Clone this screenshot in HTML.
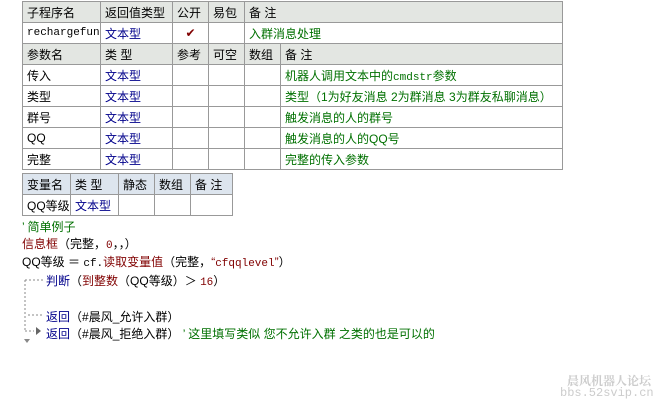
<!DOCTYPE html>
<html><head><meta charset="utf-8"><style>
body{margin:0;width:671px;height:405px;background:#fff;position:relative;overflow:hidden;font-family:"Liberation Sans","Noto Sans CJK SC",sans-serif;font-size:12px;}
table{position:absolute;border-collapse:collapse;}
td{border:1px solid #999;height:20px;padding:0 0 0 4px;white-space:nowrap;color:#000;}
.h td{background:#e3e6e2;}
.h2 td{background:#dde5ee;}
.b{color:#00008b}.g{color:#007000}.r{color:#800000}
.code{position:absolute;left:22px;white-space:nowrap;font-size:12px;}
.m{font-family:"Liberation Mono",monospace;font-size:11px;}
</style></head><body>
<table style="left:22px;top:1px;width:541px">
<colgroup><col style="width:78px"><col style="width:72px"><col style="width:36px"><col style="width:36px"><col style="width:36px"><col></colgroup>
<tr class="h"><td>子程序名</td><td>返回值类型</td><td>公开</td><td>易包</td><td colspan="2">备 注</td></tr>
<tr><td class="m">rechargefun</td><td class="b">文本型</td><td style="text-align:center;color:#800000;padding:0">✔</td><td></td><td colspan="2" class="g">入群消息处理</td></tr>
<tr class="h"><td>参数名</td><td>类 型</td><td>参考</td><td>可空</td><td>数组</td><td>备 注</td></tr>
<tr><td>传入</td><td class="b">文本型</td><td></td><td></td><td></td><td class="g">机器人调用文本中的<span class="m">cmdstr</span>参数</td></tr>
<tr><td>类型</td><td class="b">文本型</td><td></td><td></td><td></td><td class="g">类型（1为好友消息 2为群消息 3为群友私聊消息）</td></tr>
<tr><td>群号</td><td class="b">文本型</td><td></td><td></td><td></td><td class="g">触发消息的人的群号</td></tr>
<tr><td>QQ</td><td class="b">文本型</td><td></td><td></td><td></td><td class="g">触发消息的人的QQ号</td></tr>
<tr><td>完整</td><td class="b">文本型</td><td></td><td></td><td></td><td class="g">完整的传入参数</td></tr>
</table>
<table style="left:22px;top:173px;width:211px">
<colgroup><col style="width:48px"><col style="width:48px"><col style="width:36px"><col style="width:36px"><col></colgroup>
<tr class="h2"><td>变量名</td><td>类 型</td><td>静态</td><td>数组</td><td>备 注</td></tr>
<tr><td>QQ等级</td><td class="b">文本型</td><td></td><td></td><td></td></tr>
</table>
<div class="code g" style="top:218px">’ 简单例子</div>
<div class="code" style="top:235px"><span class="r">信息框</span>（完整，<span class="r m">0</span>，，）</div>
<div class="code" style="top:253px">QQ等级 ＝ <span class="m">cf.</span><span class="r">读取变量值</span>（完整，<span class="r">“<span class="m">cfqqlevel</span>”</span>）</div>
<div class="code" style="top:272px;left:46px"><span class="b">判断</span>（<span class="r">到整数</span>（QQ等级）＞ <span class="r m">16</span>）</div>
<div class="code" style="top:308px;left:46px"><span class="b">返回</span>（#晨风_允许入群）</div>
<div class="code" style="top:325px;left:46px"><span class="b">返回</span>（#晨风_拒绝入群） <span class="g">’ 这里填写类似 您不允许入群 之类的也是可以的</span></div>
<svg style="position:absolute;left:22px;top:275px" width="26" height="70"><path d="M3 5 H22 M3 5 V56 M6 40 H20 M3 56 H12" stroke="#888" stroke-dasharray="2,2" fill="none"/><path d="M14 52 L19 56 L14 60Z" fill="#666"/><path d="M2 64 H8 L5 68Z" fill="#888"/></svg>
<div style="position:absolute;left:567px;top:372px;color:#ccc;font-size:12px;font-weight:bold;font-family:'Liberation Serif','Noto Serif CJK SC',serif">晨风机器人论坛</div>
<div style="position:absolute;left:560px;top:386px;color:#ccc;font-size:12px;font-family:'Liberation Mono',monospace">bbs.52svip.cn</div>
</body></html>
